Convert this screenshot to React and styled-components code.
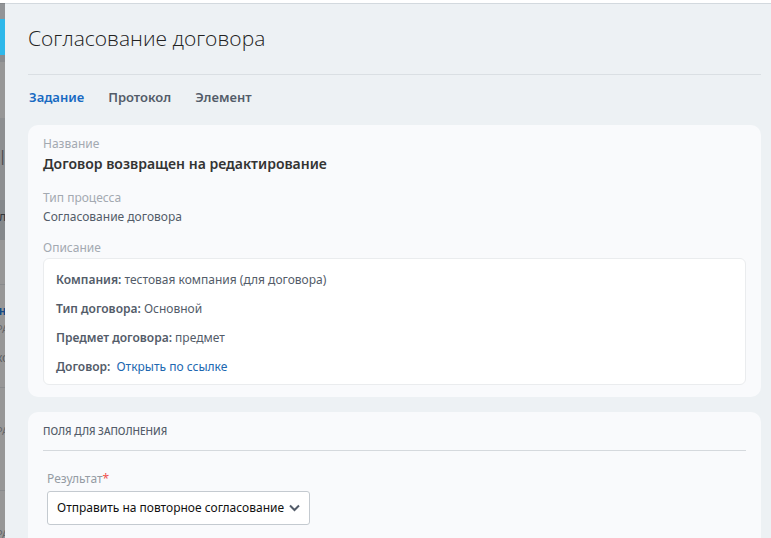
import React, { useState } from "react";
import styled, { createGlobalStyle } from "styled-components";

const tabs = ["Задание", "Протокол", "Элемент"];

const details = [
  { label: "Компания:", value: "тестовая компания (для договора)" },
  { label: "Тип договора:", value: "Основной" },
  { label: "Предмет договора:", value: "предмет" },
  { label: "Договор:", value: "Открыть по ссылке", href: "#contract" },
];

//rows of the page that stays visible under the slider
const pageRows = [
  { height: 15, bg: "#929497" },
  { height: 36, bg: "#2fb8ea" },
  { height: 7, bg: "#8a8c8f" },
  { height: 56, bg: "#979797" },
  { height: 76, bg: "#8d8f91", text: "|", color: "#3f4347", size: 14 },
  { height: 6, bg: "#8d8f91" },
  { height: 32, bg: "#84888b", text: "л", color: "#33373b", size: 13 },
  { height: 8, bg: "#84888b" },
  { height: 45, bg: "#979797", line: true },
  { height: 17, bg: "#979797" },
  { height: 17, bg: "#979797", text: "н", color: "#164a86", bold: true },
  { height: 19, bg: "#979797", text: "РА", color: "#63666a", size: 10 },
  { height: 40, bg: "#979797", text: "ко", color: "#5c5f63", size: 12 },
  { height: 10, bg: "#979797", line: true },
  { height: 86, bg: "#979797", text: "РА", color: "#63666a", size: 10 },
  { height: 17, bg: "#979797", line: true },
  { height: 27, bg: "#979797" },
  { height: 32, bg: "#979797", text: "РА", color: "#63666a", size: 10 },
];

const App = () => {
  const [active, setActive] = useState(tabs[0]);
  return (
    <>
      <GlobalStyle />
      <Layout>
        <PageEdge aria-hidden="true">
          {pageRows.map((row, index) => (
            <EdgeRow
              key={index}
              $height={row.height}
              $bg={row.bg}
              $color={row.color}
              $bold={row.bold}
              $size={row.size}
              $line={row.line}
            >
              {row.text}
            </EdgeRow>
          ))}
        </PageEdge>
        <Slider>
          <Title>Согласование договора</Title>
          <Tabs>
            {tabs.map((tab) => (
              <Tab
                key={tab}
                type="button"
                $active={tab === active}
                onClick={() => setActive(tab)}
              >
                {tab}
              </Tab>
            ))}
          </Tabs>
          <Card>
            <Label>Название</Label>
            <TaskName>Договор возвращен на редактирование</TaskName>
            <Label>Тип процесса</Label>
            <Value>Согласование договора</Value>
            <Label>Описание</Label>
            <Description>
              {details.map(({ label, value, href }) => (
                <p key={label}>
                  <strong>{label}</strong>{" "}
                  {href ? <DocLink href={href}>{value}</DocLink> : value}
                </p>
              ))}
            </Description>
          </Card>
          <Card>
            <CardTitle>Поля для заполнения</CardTitle>
            <Field>
              <FieldLabel htmlFor="result">
                Результат<span>*</span>
              </FieldLabel>
              <SelectBox>
                <Select id="result" required>
                  <option>Отправить на повторное согласование</option>
                </Select>
                <Chevron viewBox="0 0 11 8" aria-hidden="true">
                  <path d="M1 1.5l4.5 4.5 4.5-4.5" />
                </Chevron>
              </SelectBox>
            </Field>
          </Card>
        </Slider>
      </Layout>
    </>
  );
};

const GlobalStyle = createGlobalStyle`
  * {
    box-sizing: border-box;
  }
  body {
    margin: 0;
    background: #fff;
    color: #535c69;
    font-family: "Noto Sans", "Open Sans", sans-serif;
    font-size: 12px;
    line-height: 18px;
  }
  h1, h2, p {
    margin: 0;
  }
`;

const Layout = styled.main`
  display: flex;
  height: 100vh;
  padding-top: 3px;
  overflow: hidden;
`;

const PageEdge = styled.div`
  flex: none;
  width: 5px;
  overflow: hidden;
  border-top: 1px solid #85888b;
`;

const EdgeRow = styled.div`
  display: flex;
  align-items: center;
  justify-content: center;
  height: ${(props) => props.$height}px;
  overflow: hidden;
  background: ${(props) => props.$bg};
  border-bottom: ${(props) => (props.$line ? "1px solid #898b8d" : "none")};
  color: ${(props) => props.$color};
  font-size: ${(props) => props.$size || 12}px;
  font-weight: ${(props) => (props.$bold ? 700 : 400)};
  white-space: nowrap;
`;

const Slider = styled.div`
  flex: 1;
  min-width: 0;
  padding: 0 10px 0 23px;
  overflow-y: auto;
  scrollbar-width: none;
  background: #edf1f4;
  border-top: 1px solid #d3d9de;
`;

const Title = styled.h1`
  padding: 18px 0 20px;
  border-bottom: 1px solid #dadfe3;
  color: #222;
  font-family: "Open Sans", "Noto Sans", sans-serif;
  font-size: 21px;
  font-weight: 300;
  line-height: 32px;
`;

const Tabs = styled.nav`
  display: flex;
  gap: 24px;
  padding: 12px 1px 18px;
`;

const Tab = styled.button`
  padding: 0;
  background: none;
  border: 0;
  color: ${(props) => (props.$active ? "#1769c2" : "#535c69")};
  font: inherit;
  font-size: 13px;
  font-weight: 600;
  line-height: 20px;
  cursor: pointer;
`;

const Card = styled.section`
  margin-bottom: 15px;
  padding: 10px 15px 12px;
  background: #f9fafc;
  border-radius: 10px;
`;

const Label = styled.div`
  color: #a3a9b1;
`;

const TaskName = styled.h2`
  margin-bottom: 14px;
  color: #333;
  font-size: 14px;
  font-weight: 600;
  line-height: 22px;
`;

const Value = styled.div`
  margin-bottom: 12px;
  line-height: 20px;
`;

const Description = styled.div`
  display: grid;
  gap: 11px;
  margin-top: 1px;
  padding: 12px 12px 8px;
  background: #fff;
  border: 1px solid #eaecee;
  border-radius: 6px;
  strong {
    font-weight: 600;
  }
`;

const DocLink = styled.a`
  margin-left: 3px;
  color: #2067b0;
  text-decoration: none;
`;

const CardTitle = styled.h2`
  padding-bottom: 10px;
  border-bottom: 1px solid #d5d9dd;
  font-size: 10px;
  font-weight: 500;
  line-height: 18px;
  text-transform: uppercase;
`;

const Field = styled.div`
  padding: 19px 4px 40px;
`;

const FieldLabel = styled.label`
  display: block;
  margin-bottom: 3px;
  color: #959ca4;
  span {
    color: #f0524f;
  }
`;

const SelectBox = styled.div`
  display: inline-block;
  position: relative;
`;

const Select = styled.select`
  height: 34px;
  padding: 0 24px 0 9px;
  appearance: none;
  background: #fff;
  border: 1px solid #c4cad0;
  border-radius: 3px;
  color: #111;
  font: inherit;
`;

const Chevron = styled.svg`
  position: absolute;
  top: 13px;
  right: 10px;
  width: 11px;
  height: 8px;
  fill: none;
  stroke: #535c69;
  stroke-width: 2;
  pointer-events: none;
`;

export default App;
